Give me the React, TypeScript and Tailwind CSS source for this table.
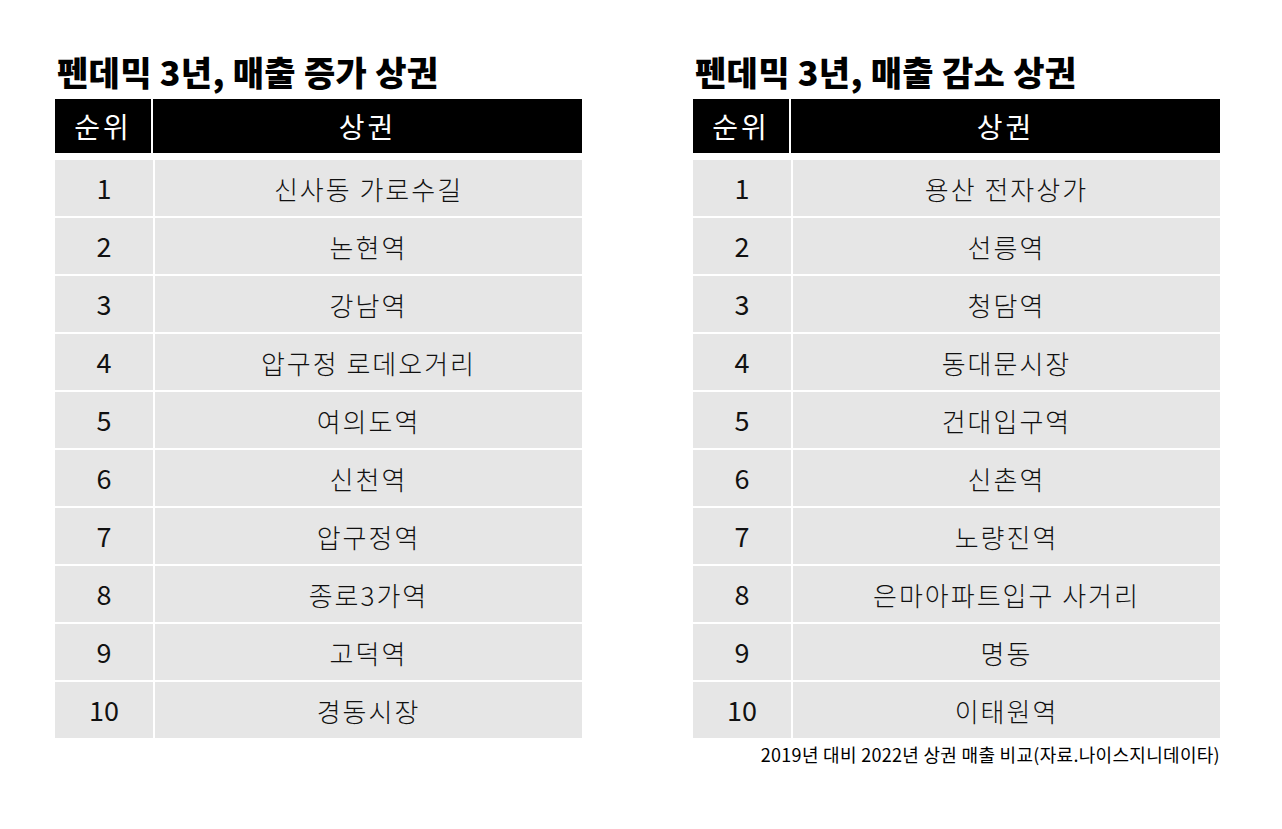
import React from "react";

const up = ["신사동 가로수길", "논현역", "강남역", "압구정 로데오거리", "여의도역", "신천역", "압구정역", "종로3가역", "고덕역", "경동시장"];
const down = ["용산 전자상가", "선릉역", "청담역", "동대문시장", "건대입구역", "신촌역", "노량진역", "은마아파트입구 사거리", "명동", "이태원역"];

function RankTable({ title, items }: { title: string; items: string[] }) {
  return (
    <div className="w-[527px] flex flex-col">
      <h2 className="text-[34px] font-black leading-none tracking-[0.3px] text-black pl-[2px] h-[44px]">{title}</h2>
      <div className="flex gap-[2px] h-[54px] bg-white">
        <div className="w-[96px] bg-black text-white flex items-center justify-center text-[28px] tracking-[3px]">순위</div>
        <div className="flex-1 bg-black text-white flex items-center justify-center text-[28px] tracking-[3px]">상권</div>
      </div>
      <div className="flex flex-col gap-[2px] mt-[7px]">
        {items.map((name, i) => (
          <div key={name} className="flex gap-[2px] h-[56px]">
            <div className="w-[98px] bg-[#e6e6e6] flex items-center justify-center text-[27px]">{i + 1}</div>
            <div className="flex-1 bg-[#e6e6e6] flex items-center justify-center text-[26px] tracking-[2px] font-light">{name}</div>
          </div>
        ))}
      </div>
    </div>
  );
}

export default function App() {
  return (
    <div className="w-[1282px] h-[829px] bg-white text-[#111] font-['Noto_Sans_CJK_KR','Noto_Sans',sans-serif]">
      <div className="flex gap-[111px] pl-[55px] pt-[55px]">
        <RankTable title="펜데믹 3년, 매출 증가 상권" items={up} />
        <div className="flex flex-col">
          <RankTable title="펜데믹 3년, 매출 감소 상권" items={down} />
          <p className="text-right text-[18px] tracking-[0.3px] mt-[3px] text-black">2019년 대비 2022년 상권 매출 비교(자료.나이스지니데이타)</p>
        </div>
      </div>
    </div>
  );
}
